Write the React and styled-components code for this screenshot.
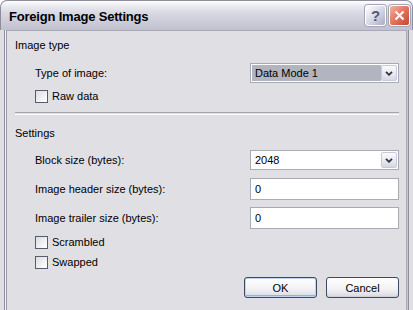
import React from "react";
import styled, { createGlobalStyle } from "styled-components";

const GlobalStyle = createGlobalStyle`
  html, body {
    margin: 0;
    padding: 0;
    background: #ffffff;
  }
  body {
    font-family: "Liberation Sans", Arial, sans-serif;
    font-size: 11px;
    color: #000;
  }
`;

const Window = styled.div`
  width: 413px;
  height: 310px;
  display: flex;
  flex-direction: column;
  overflow: hidden;
`;

const TitleBar = styled.div`
  height: 30px;
  box-sizing: border-box;
  display: flex;
  align-items: center;
  padding: 0 2px 0 8px;
  border: 1px solid #8d8d9c;
  border-bottom: none;
  border-radius: 7px 7px 0 0;
  background: linear-gradient(
    to bottom,
    #ffffff 0%,
    #ececf2 15%,
    #d8d8e2 42%,
    #cbcbd7 75%,
    #c0c0ce 100%
  );
`;

const Title = styled.div`
  flex: 1;
  font-family: "Liberation Sans", Arial, sans-serif;
  font-weight: bold;
  font-size: 13px;
  color: #000;
  letter-spacing: -0.2px;
  padding-top: 1px;
`;

const CaptionButton = styled.div`
  width: 21px;
  height: 21px;
  box-sizing: border-box;
  margin-left: 3px;
  border: 1px solid #ffffff;
  border-radius: 3px;
  display: flex;
  align-items: center;
  justify-content: center;
  box-shadow: 0 0 0 1px #a5a7b8;
  background: ${(p) =>
    p.close
      ? "linear-gradient(135deg, #f2b4a4 0%, #e27a64 45%, #c4472f 100%)"
      : "linear-gradient(135deg, #ffffff 0%, #d8d9e6 50%, #a9abc0 100%)"};
  color: ${(p) => (p.close ? "#ffffff" : "#525a78")};
  font-family: "Liberation Sans", Arial, sans-serif;
  font-size: 15px;
  font-weight: bold;
`;

const Frame = styled.div`
  flex: 1;
  display: flex;
  background: #e0dfe3;
  border-left: 4px solid #e0dfe3;
  border-right: 4px solid #e0dfe3;
  box-shadow: inset 1px 0 #8d8d9c, inset 2px 0 #f4f4f7, inset 3px 0 #9a9aaa,
    inset -1px 0 #8d8d9c, inset -2px 0 #c8c8d2, inset -3px 0 #a8a8b8,
    inset 0 1px #a8a8b8;
`;

const Content = styled.div`
  flex: 1;
  padding: 8px 10px 0 11px;
  display: flex;
  flex-direction: column;
`;

const SectionTitle = styled.div`
  line-height: 14px;
  height: 14px;
  margin-top: ${(p) => p.gap || 0}px;
`;

const FieldRow = styled.div`
  display: grid;
  grid-template-columns: 215px 149px;
  padding-left: 20px;
  align-items: center;
  margin-top: ${(p) => p.gap}px;
`;

const Label = styled.div`
  line-height: 14px;
`;

const Combo = styled.div`
  height: 20px;
  box-sizing: border-box;
  border: 1px solid #a5acb5;
  background: #ffffff;
  display: flex;
  padding: 1px;
`;

const ComboValue = styled.div`
  flex: 1;
  display: flex;
  align-items: center;
  padding-left: 3px;
  background: ${(p) => (p.selected ? "#b2b4bf" : "#ffffff")};
  line-height: 14px;
`;

const DropButton = styled.div`
  width: 16px;
  box-sizing: border-box;
  border: 1px solid #c9cad6;
  border-radius: 2px;
  background: linear-gradient(to bottom, #fafafd 0%, #e6e7ef 60%, #d6d7e2 100%);
  display: flex;
  align-items: center;
  justify-content: center;
`;

const TextBox = styled.div`
  height: 22px;
  box-sizing: border-box;
  border: 1px solid #a5acb5;
  background: #ffffff;
  padding-left: 4px;
  display: flex;
  align-items: center;
  line-height: 14px;
`;

const CheckRow = styled.label`
  display: flex;
  align-items: center;
  gap: 4px;
  padding-left: 20px;
  height: 13px;
  margin-top: ${(p) => p.gap}px;
  line-height: 13px;
`;

const Box = styled.span`
  width: 13px;
  height: 13px;
  box-sizing: border-box;
  border: 1px solid #545d6d;
  background: linear-gradient(135deg, #dcdce2 0%, #f2f2f5 60%, #ffffff 100%);
`;

const Divider = styled.div`
  height: 1px;
  margin-top: ${(p) => p.gap}px;
  border-top: 1px solid #a6a5aa;
  border-bottom: 1px solid #ffffff;
`;

const ButtonRow = styled.div`
  display: flex;
  justify-content: flex-end;
  gap: 9px;
  margin-top: ${(p) => p.gap}px;
`;

const Button = styled.div`
  width: 73px;
  height: 21px;
  box-sizing: border-box;
  border: 1px solid #3d4a5f;
  border-radius: 3px;
  display: flex;
  align-items: center;
  justify-content: center;
  line-height: 14px;
  background: linear-gradient(to bottom, #ffffff 0%, #f3f3f6 55%, #e2e2ea 85%, #d4d4dc 100%);
  box-shadow: ${(p) =>
    p.primary
      ? "inset 0 0 0 1px #c2d2ee, inset 0 -1px 0 1px #95b0de"
      : "inset 0 -1px 0 #d0d0d8"};
`;

function Chevron() {
  return (
    <svg width="8" height="5" viewBox="0 0 8 5">
      <path d="M1 0.8 L4 3.8 L7 0.8" fill="none" stroke="#2f3442" strokeWidth="1.8" />
    </svg>
  );
}

function CloseGlyph() {
  return (
    <svg width="11" height="11" viewBox="0 0 11 11">
      <path d="M1.5 1.5 L9.5 9.5 M9.5 1.5 L1.5 9.5" stroke="#ffffff" strokeWidth="2" />
    </svg>
  );
}

function Check({ label, gap }) {
  return (
    <CheckRow gap={gap}>
      <Box />
      <span>{label}</span>
    </CheckRow>
  );
}

export default function App() {
  return (
    <>
      <GlobalStyle />
      <Window>
        <TitleBar>
          <Title>Foreign Image Settings</Title>
          <CaptionButton>?</CaptionButton>
          <CaptionButton close>
            <CloseGlyph />
          </CaptionButton>
        </TitleBar>
        <Frame>
          <Content>
            <SectionTitle>Image type</SectionTitle>
            <FieldRow gap={11}>
              <Label>Type of image:</Label>
              <Combo>
                <ComboValue selected>Data Mode 1</ComboValue>
                <DropButton>
                  <Chevron />
                </DropButton>
              </Combo>
            </FieldRow>
            <Check label="Raw data" gap={7} />
            <Divider gap={9} />
            <SectionTitle gap={11}>Settings</SectionTitle>
            <FieldRow gap={10}>
              <Label>Block size (bytes):</Label>
              <Combo>
                <ComboValue>2048</ComboValue>
                <DropButton>
                  <Chevron />
                </DropButton>
              </Combo>
            </FieldRow>
            <FieldRow gap={8}>
              <Label>Image header size (bytes):</Label>
              <TextBox>0</TextBox>
            </FieldRow>
            <FieldRow gap={7}>
              <Label>Image trailer size (bytes):</Label>
              <TextBox>0</TextBox>
            </FieldRow>
            <Check label="Scrambled" gap={7} />
            <Check label="Swapped" gap={7} />
            <ButtonRow gap={8}>
              <Button primary>OK</Button>
              <Button>Cancel</Button>
            </ButtonRow>
          </Content>
        </Frame>
      </Window>
    </>
  );
}
